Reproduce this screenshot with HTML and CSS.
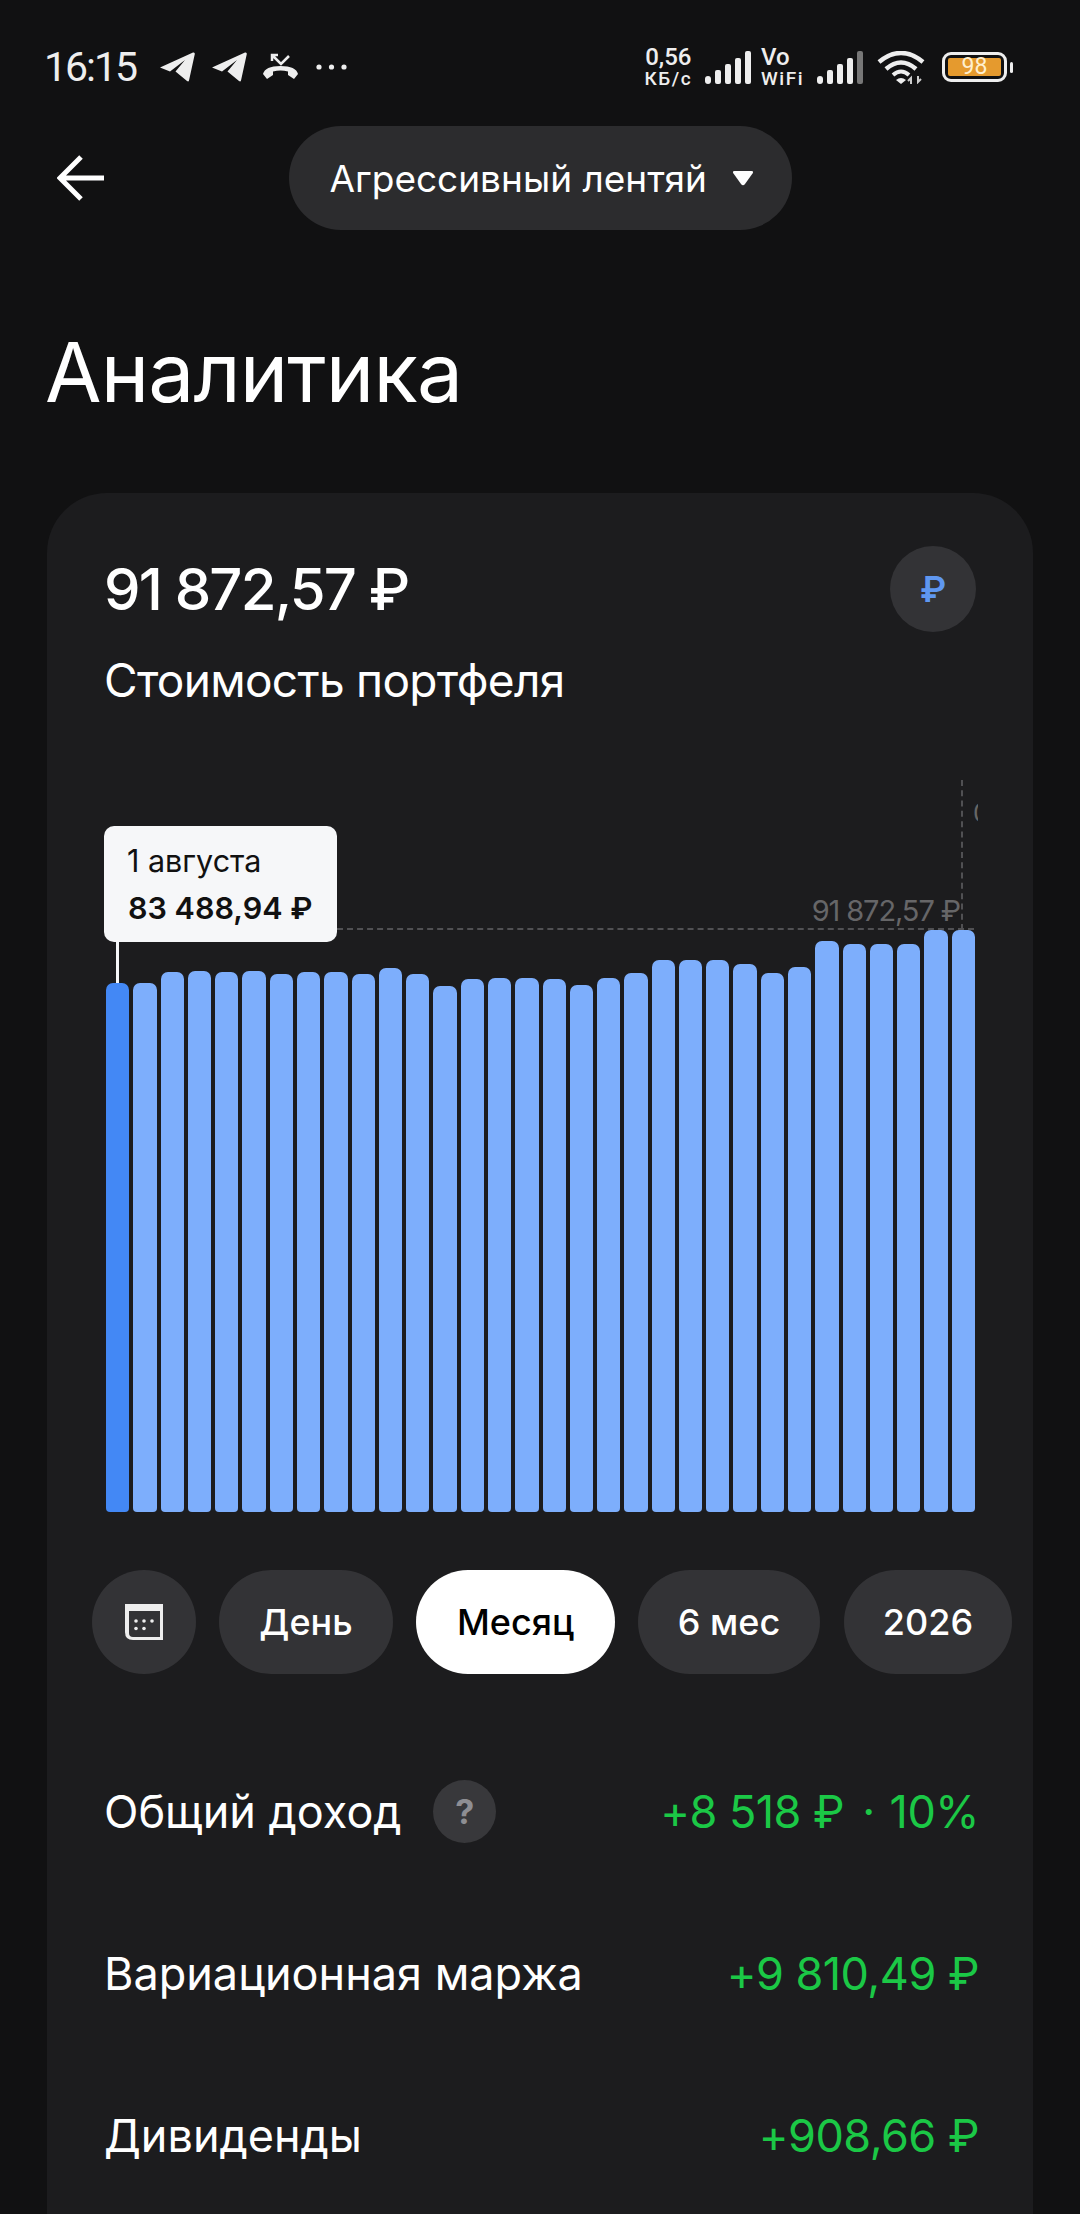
FILE: index.html
```html
<!DOCTYPE html>
<html lang="ru">
<head>
    <meta charset="UTF-8">
    <meta name="viewport" content="width=device-width, initial-scale=1.0">
    <title>Аналитика</title>
    <link rel="stylesheet" href="styles.css">
</head>
<body>

    <div class="status-bar">
        <div class="status-left">
            <span class="time">16:15</span>
            <svg class="tg-icon" viewBox="0 0 35 30"><path d="M0 15.5 33 .5Q35 0 34.8 2L29 28.500Q28.500 30 27 29L15.500 19.500 25 8 10 19.500Z" fill="#eee"/></svg>
            <svg class="tg-icon" viewBox="0 0 35 30"><path d="M0 15.5 33 .5Q35 0 34.8 2L29 28.500Q28.500 30 27 29L15.500 19.500 25 8 10 19.500Z" fill="#eee"/></svg>
            <svg class="call-icon" viewBox="0 0 37 27">
                <path d="M10 8V2H16M10 2 19 11 27 3" fill="none" stroke="#eee" stroke-width="2.500"/>
                <path d="M1 21Q3 13 18.500 13T36 21L32 26 26 22V18.500Q18.500 16.500 11 18.500V22L5 26Z" fill="#eee"/>
            </svg>
            <svg class="dots-icon" viewBox="0 0 31 6"><circle cx="3" cy="3" r="2.600" fill="#eee"/><circle cx="15.500" cy="3" r="2.600" fill="#eee"/><circle cx="28" cy="3" r="2.600" fill="#eee"/></svg>
        </div>
        <div class="status-right">
            <div class="speed"><span class="speed-top">0,56</span><span>КБ/с</span></div>
            <svg class="signal-icon" viewBox="0 0 46 33">
                <rect x="0" y="25" width="6" height="8" rx="3" fill="#eee"/>
                <rect x="10" y="19" width="6" height="14" rx="2" fill="#eee"/>
                <rect x="20" y="13" width="6" height="20" rx="2" fill="#eee"/>
                <rect x="30" y="7" width="6" height="26" rx="2" fill="#eee"/>
                <rect x="40" y="0" width="6" height="33" rx="2" fill="#eee"/>
            </svg>
            <div class="speed vowifi"><span class="speed-top">Vo</span><span>WiFi</span></div>
            <svg class="signal-icon" viewBox="0 0 46 33">
                <rect x="0" y="25" width="6" height="8" rx="3" fill="#eee"/>
                <rect x="10" y="19" width="6" height="14" rx="2" fill="#eee"/>
                <rect x="20" y="13" width="6" height="20" rx="2" fill="#eee"/>
                <rect x="30" y="7" width="6" height="26" rx="2" fill="#eee"/>
                <rect x="40" y="0" width="6" height="33" rx="2" fill="#777"/>
            </svg>
            <svg class="wifi-icon" viewBox="0 0 48 33">
                <path d="M2 11Q24-7 46 11" fill="none" stroke="#eee" stroke-width="4.500"/>
                <path d="M9 18Q24 5 39 18" fill="none" stroke="#eee" stroke-width="4.500"/>
                <path d="M16 24Q24 17 32 24" fill="none" stroke="#eee" stroke-width="4"/>
                <path d="M19 29Q24 25 29 29L24 33Z" fill="#eee"/>
                <path d="M34 33V27L31 30M41 25V31L44 28" fill="none" stroke="#ccc" stroke-width="2"/>
            </svg>
            <div class="battery"><span class="battery-fill">98</span></div>
            <span class="battery-nub"></span>
        </div>
    </div>

    <div class="nav">
        <svg class="back-icon" viewBox="0 0 48 46"><path d="M47 23H4M24 2 3 23 24 44" fill="none" stroke="#fff" stroke-width="5"/></svg>
        <div class="account-pill">
            <span>Агрессивный лентяй</span>
            <svg class="caret-icon" viewBox="0 0 22 16"><path d="M2.500 1H19.500Q22 1 20.500 3.500L13 14Q11 16.500 9 14L1.500 3.500Q0 1 2.500 1Z" fill="#fff"/></svg>
        </div>
    </div>

    <h1 class="page-title">Аналитика</h1>

    <div class="card">
        <div class="card-head">
            <div class="card-title">
                <div class="total">91 872,57 ₽</div>
                <div class="total-label">Стоимость портфеля</div>
            </div>
            <div class="currency-btn">₽</div>
        </div>

        <div class="chart">
            <div class="line-h"></div>
            <div class="line-v"></div>
            <div class="next-label"><span>0</span></div>
            <div class="last-value">91 872,57 ₽</div>
            <div class="tooltip">
                <div class="tooltip-date">1 августа</div>
                <div class="tooltip-value">83 488,94 ₽</div>
            </div>
            <div class="tooltip-stem"></div>
            <div class="bars">
                <div class="bar active" style="height:529px"></div>
                <div class="bar" style="height:529px"></div>
                <div class="bar" style="height:540px"></div>
                <div class="bar" style="height:541px"></div>
                <div class="bar" style="height:540px"></div>
                <div class="bar" style="height:541px"></div>
                <div class="bar" style="height:538px"></div>
                <div class="bar" style="height:540px"></div>
                <div class="bar" style="height:540px"></div>
                <div class="bar" style="height:538px"></div>
                <div class="bar" style="height:544px"></div>
                <div class="bar" style="height:538px"></div>
                <div class="bar" style="height:526px"></div>
                <div class="bar" style="height:533px"></div>
                <div class="bar" style="height:534px"></div>
                <div class="bar" style="height:534px"></div>
                <div class="bar" style="height:533px"></div>
                <div class="bar" style="height:527px"></div>
                <div class="bar" style="height:534px"></div>
                <div class="bar" style="height:539px"></div>
                <div class="bar" style="height:552px"></div>
                <div class="bar" style="height:552px"></div>
                <div class="bar" style="height:552px"></div>
                <div class="bar" style="height:548px"></div>
                <div class="bar" style="height:539px"></div>
                <div class="bar" style="height:545px"></div>
                <div class="bar" style="height:571px"></div>
                <div class="bar" style="height:568px"></div>
                <div class="bar" style="height:568px"></div>
                <div class="bar" style="height:568px"></div>
                <div class="bar" style="height:582px"></div>
                <div class="bar" style="height:582px"></div>
            </div>
        </div>

        <div class="periods">
            <div class="period period-icon">
                <svg class="calendar-icon" viewBox="0 0 38 36">
                    <path d="M0 0H38V36H8Q0 36 0 28Z" fill="#eee"/>
                    <path d="M4 7H35V33H8Q4 33 4 29Z" fill="#333336"/>
                    <circle cx="11" cy="17" r="1.800" fill="#eee"/><circle cx="19" cy="17" r="1.800" fill="#eee"/><circle cx="27" cy="17" r="1.800" fill="#eee"/>
                    <circle cx="11" cy="24.500" r="1.800" fill="#eee"/><circle cx="19" cy="24.500" r="1.800" fill="#eee"/>
                </svg>
            </div>
            <div class="period period-day">День</div>
            <div class="period period-month selected">Месяц</div>
            <div class="period period-six">6 мес</div>
            <div class="period period-year">2026</div>
        </div>

        <div class="stat-row first">
            <div class="stat-name">Общий доход <span class="help">?</span></div>
            <div class="stat-value">+8 518 ₽<span class="stat-dot">·</span>10%</div>
        </div>
        <div class="stat-row">
            <div class="stat-name">Вариационная маржа</div>
            <div class="stat-value">+9 810,49 ₽</div>
        </div>
        <div class="stat-row">
            <div class="stat-name">Дивиденды</div>
            <div class="stat-value">+908,66 ₽</div>
        </div>
    </div>

</body>
</html>
```

FILE: styles.css
```css
html, body {
    height: 2214px;
    overflow: hidden;
}

body {
    margin: 0;
    background-color: #111112;
    color: #fff;
    font-family: Inter, "Noto Sans", sans-serif;
}

svg {
    display: block;
    flex: none;
}

/* status bar */
.status-bar {
    display: flex;
    justify-content: space-between;
    align-items: center;
    height: 46px;
    padding: 44px 67px 0 44px;
    color: #eee;
}

.status-left, .status-right {
    display: flex;
    align-items: center;
}

.time {
    font-family: Roboto, sans-serif;
    font-size: 41px;
    letter-spacing: -2px;
    margin-right: 24px;
}

.tg-icon {
    width: 35px;
    height: 30px;
    margin-right: 17px;
}

.call-icon {
    width: 37px;
    height: 27px;
    margin: -2px 17px 0 -2px;
}

.dots-icon {
    width: 31px;
    height: 6px;
}

.speed {
    display: flex;
    flex-direction: column;
    font-family: Roboto, sans-serif;
    font-weight: 500;
    font-size: 19px;
    letter-spacing: 1.500px;
    line-height: 20px;
    margin-right: 13px;
    text-align: center;
}

.speed-top {
    font-size: 24px;
    letter-spacing: 0;
    line-height: 23px;
}

.vowifi {
    margin: 0 13px 0 10px;
    text-align: left;
}

.signal-icon {
    width: 46px;
    height: 33px;
}

.wifi-icon {
    width: 48px;
    height: 33px;
    margin: 0 17px 0 14px;
}

.battery {
    width: 65px;
    height: 30px;
    box-sizing: border-box;
    border: 3px solid #eee;
    border-radius: 9px;
    padding: 3px;
}

.battery-fill {
    display: block;
    height: 18px;
    background-color: #e59a2e;
    border-radius: 2px;
    color: #fff0d0;
    font-family: Roboto, sans-serif;
    font-size: 23px;
    line-height: 18px;
    text-align: center;
}

.battery-nub {
    width: 3px;
    height: 11px;
    margin-left: 3px;
    background-color: #eee;
    border-radius: 2px;
}

/* top nav */
.nav {
    display: grid;
    grid-template-columns: 1fr auto 1fr;
    align-items: center;
    margin-top: 36px;
}

.back-icon {
    width: 48px;
    height: 46px;
    margin-left: 57px;
}

.account-pill {
    display: flex;
    align-items: center;
    justify-content: space-between;
    box-sizing: border-box;
    width: 503px;
    height: 104px;
    padding: 0 38px 0 41px;
    background-color: #2c2c2e;
    border-radius: 52px;
    font-size: 37px;
}

.caret-icon {
    width: 22px;
    height: 16px;
}

.page-title {
    margin: 93px 0 0 45px;
    font-size: 82px;
    font-weight: 400;
    letter-spacing: -0.9px;
    line-height: 100px;
}

/* main card */
.card {
    box-sizing: border-box;
    height: 1721px;
    margin: 70px 47px 0;
    padding: 53px 57px 0 58px;
    background-color: #1c1c1e;
    border-radius: 60px 60px 0 0;
}

.card-head {
    display: flex;
    justify-content: space-between;
    align-items: flex-start;
}

.card-title {
    margin-left: -1px;
}

.total {
    margin-top: 8px;
    font-size: 58px;
    font-weight: 500;
    letter-spacing: -1.800px;
    line-height: 70px;
}

.total-label {
    margin-top: 28px;
    font-size: 46px;
    letter-spacing: -0.7px;
    line-height: 56px;
}

.currency-btn {
    display: flex;
    align-items: center;
    justify-content: center;
    width: 86px;
    height: 86px;
    background-color: #333336;
    border-radius: 50%;
    color: #5f97f0;
    font-size: 36px;
    font-weight: 600;
}

/* chart */
.chart {
    position: relative;
    height: 732px;
    margin-top: 72px;
}

.bars {
    position: absolute;
    left: 1px;
    right: 1px;
    bottom: 0;
    display: flex;
    align-items: flex-end;
    gap: 4px;
}

.bar {
    flex: 1;
    background-color: #7daefc;
    border-radius: 7px 7px 4px 4px;
}

.bar.active {
    background-color: #4388f5;
}

.line-h {
    position: absolute;
    left: 232px;
    right: 2px;
    top: 148px;
    border-top: 2px dashed #505053;
}

.line-v {
    position: absolute;
    right: 13px;
    top: 0;
    height: 150px;
    border-left: 2px dashed #505053;
}

.next-label {
    position: absolute;
    right: -2px;
    top: 18px;
    width: 5px;
    overflow: hidden;
    color: #666;
    font-size: 26px;
    line-height: 30px;
}

.last-value {
    position: absolute;
    right: 16px;
    top: 113px;
    color: #666668;
    font-size: 29px;
    letter-spacing: -1.100px;
    line-height: 36px;
}

.tooltip {
    position: absolute;
    left: -1px;
    top: 46px;
    box-sizing: border-box;
    width: 233px;
    height: 116px;
    padding: 13px 23px;
    background-color: #f6f7f9;
    border-radius: 10px;
    color: #111;
}

.tooltip-date {
    font-size: 30.500px;
    line-height: 44px;
}

.tooltip-value {
    margin: 3px 0 0 1px;
    font-size: 30.500px;
    font-weight: 600;
    line-height: 44px;
}

.tooltip-stem {
    position: absolute;
    left: 11px;
    top: 162px;
    width: 3px;
    height: 41px;
    background-color: #f6f7f9;
}

/* period switcher */
.periods {
    display: flex;
    gap: 23px;
    margin: 58px -36px 0 -13px;
}

.period {
    display: flex;
    align-items: center;
    justify-content: center;
    height: 104px;
    background-color: #333336;
    border-radius: 52px;
    font-size: 36px;
    font-weight: 500;
}

.period-icon {
    width: 104px;
}

.period-day {
    width: 174px;
}

.period-month {
    width: 199px;
}

.period-six {
    width: 182px;
}

.period-year {
    width: 168px;
    margin-left: 1px;
}

.period.selected {
    background-color: #fff;
    color: #000;
}

.calendar-icon {
    width: 38px;
    height: 36px;
}

/* stats */
.stat-row {
    display: flex;
    justify-content: space-between;
    align-items: center;
    height: 162px;
    margin: 0 -3px 0 -1px;
    font-size: 45px;
}

.stat-row.first {
    margin-top: 56px;
}

.stat-name {
    display: flex;
    align-items: center;
    white-space: pre;
}

.help {
    display: flex;
    align-items: center;
    justify-content: center;
    width: 63px;
    height: 63px;
    margin-left: 19px;
    background-color: #38383b;
    border-radius: 50%;
    color: #8e8e93;
    font-size: 34px;
    font-weight: 700;
}

.stat-value {
    color: #1bc846;
    letter-spacing: -0.5px;
}

.stat-dot {
    margin: 0 15px 0 18px;
}
```
